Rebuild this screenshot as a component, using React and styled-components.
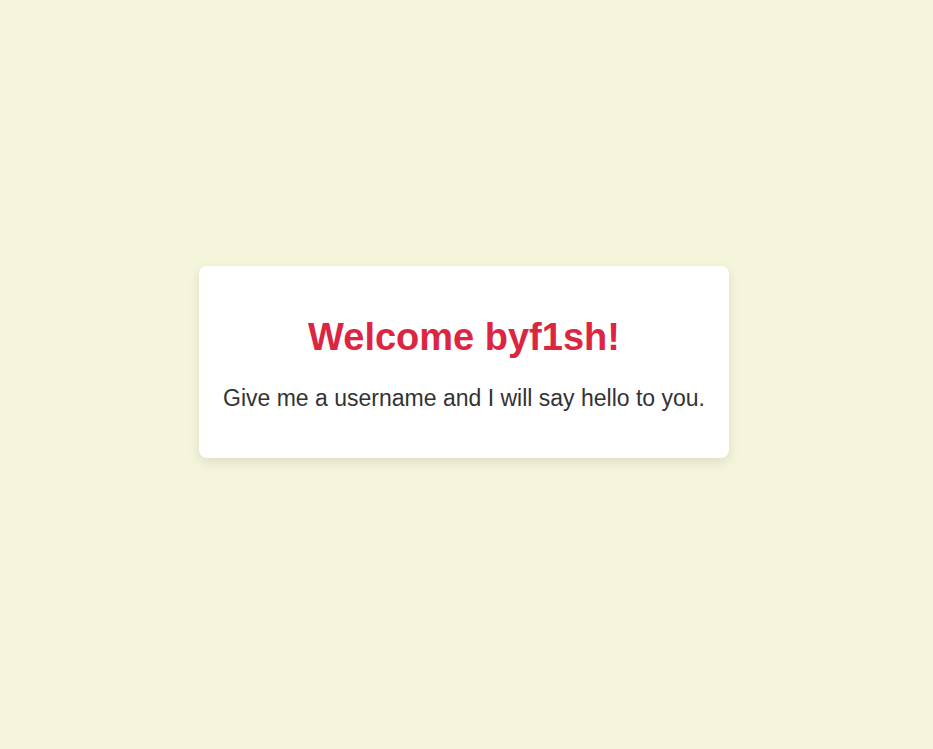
import styled, { createGlobalStyle } from "styled-components"

const GlobalStyle = createGlobalStyle`
  html, body {
    margin: 0;
    padding: 0;
    background: #f5f5dc;
    font-family: "Liberation Sans", Arial, sans-serif;
  }
`;

const Page = styled.div`
  align-items: center;
  box-sizing: border-box;
  display: flex;
  height: 100vh;
  justify-content: center;
  padding: 0 5px 26px 0;
  width: 100%;
`;

const Card = styled.div`
  background: #fff;
  border-radius: 8px;
  box-shadow: 0 4px 12px rgba(0, 0, 0, 0.1);
  box-sizing: border-box;
  padding: 30px 20px 26px;
  text-align: center;
  width: 530px;
`;

const Title = styled.h1`
  color: #dc2641;
  font-size: 38px;
  font-weight: bold;
  margin: 20px 0 26px;
`;

const Message = styled.p`
  color: #333;
  font-size: 23px;
  margin: 0 0 20px;
`;

const App = () => (
  <>
    <GlobalStyle />
    <Page>
      <Card>
        <Title>Welcome byf1sh!</Title>
        <Message>Give me a username and I will say hello to you.</Message>
      </Card>
    </Page>
  </>
)

export default App
